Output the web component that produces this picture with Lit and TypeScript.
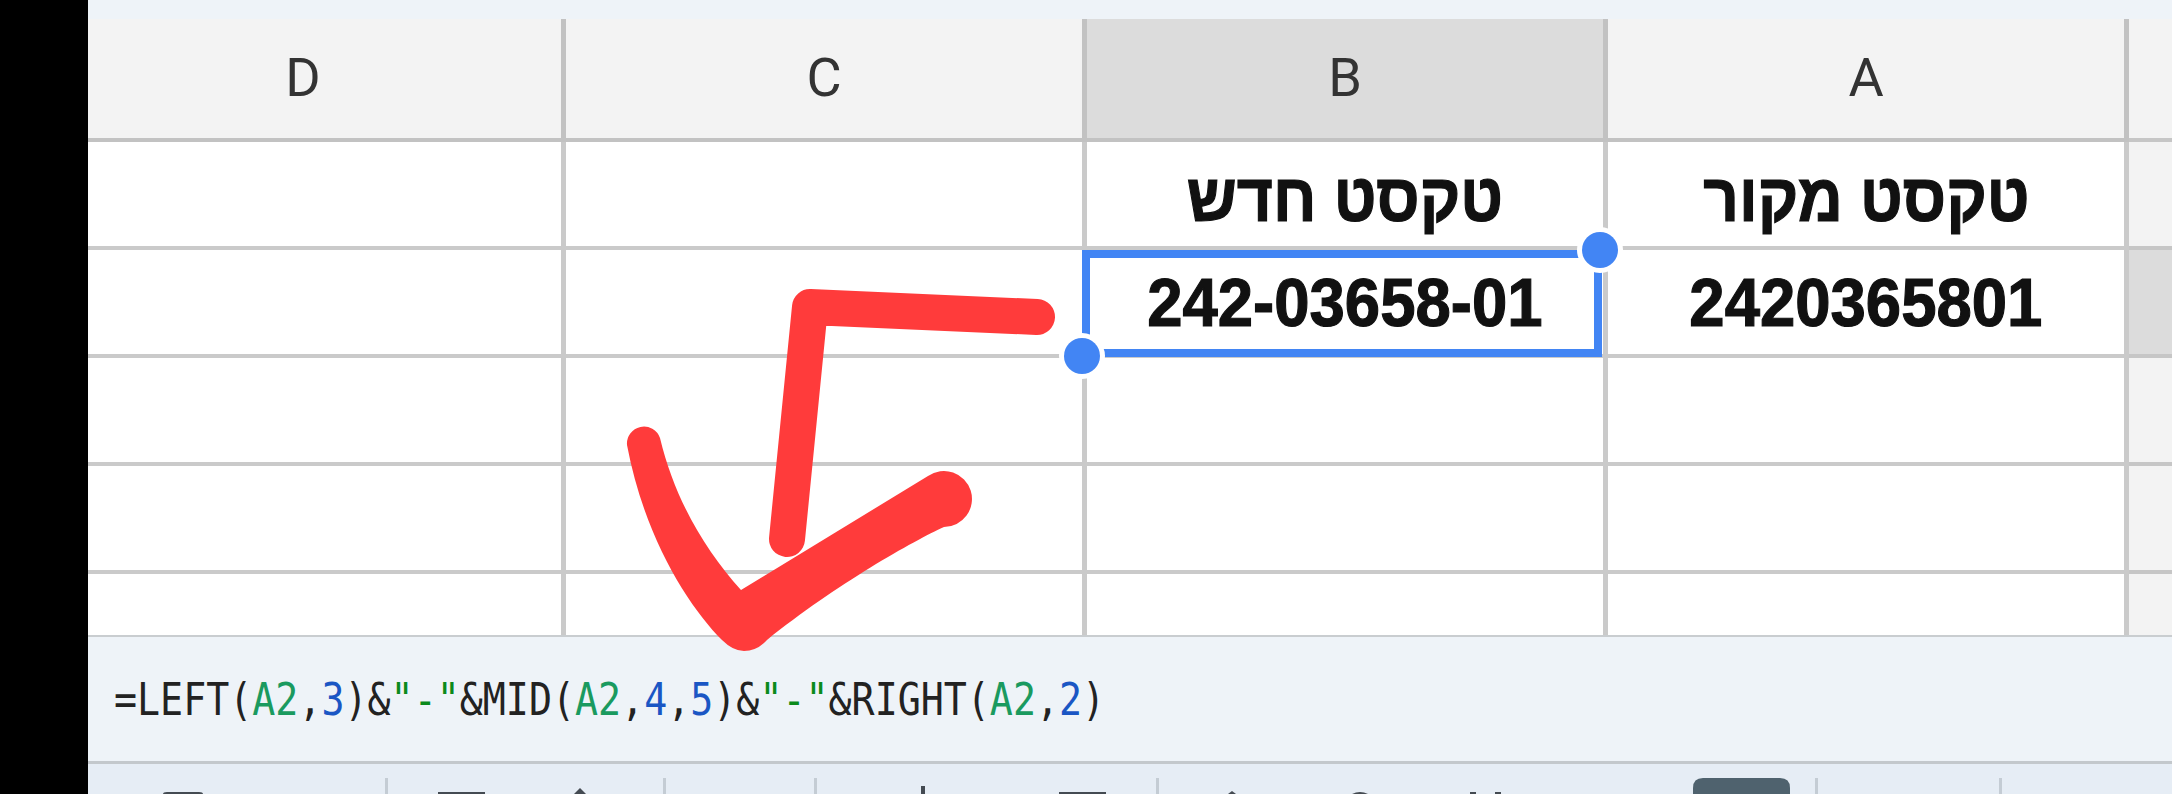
import { LitElement, html, css } from "lit";
import { customElement } from "lit/decorators.js";

const COLS = ["A", "B", "C", "D"];

@customElement("app-root")
export class AppRoot extends LitElement {
  static styles = css`
    :host { display: block; width: 2172px; height: 794px; position: relative; overflow: hidden; background: #000; font-family: "Liberation Sans", Arial, sans-serif; }
    .page { display: flex; height: 794px; margin-left: 88px; width: 2084px; flex-direction: column; background: #eef3f8; }
    .top { height: 19px; flex: none; }
    .sheet { height: 616px; flex: none; overflow: hidden; display: flex; flex-direction: column; direction: rtl; background: #fff; position: relative; }
    .row { display: flex; flex: none; height: 108px; }
    .row.head { height: 123px; background: #f3f3f3; }
    .corner { width: 43px; flex: none; background: #f3f3f3; border-bottom: 4px solid #c6c6c6; box-sizing: border-box; }
    .row.sel .corner { background: #dcdcdc; }
    .cell { width: 521px; flex: none; box-sizing: border-box; border-right: 5px solid #cacaca; border-bottom: 4px solid #cacaca; display: flex; align-items: center; justify-content: center; color: #111; font-weight: 700; direction: ltr; }
    .head .cell { border-color: #c2c2c2; color: #333; font: 400 54px Roboto, sans-serif; padding-bottom: 2px; }
    .head .cell.on { background: #dcdcdc; }
    .val { display: inline-block; font-size: 69px; transform: scaleX(0.92); white-space: nowrap; -webkit-text-stroke: 1.2px #111; }
    .he { direction: rtl; font-size: 67.5px; padding-top: 7px; }
    .last { height: 66px; }
    .sheetline { height: 2px; flex: none; background: #c9cdd0; }
    .formula { height: 124px; flex: none; display: flex; align-items: center; padding-left: 26px; border-bottom: 3px solid #c3c8cc; }
    .ftext { display: inline-block; font: 400 44px "DejaVu Sans Mono", monospace; color: #222; transform: scaleX(0.87); transform-origin: left center; white-space: pre; }
    .g { color: #1a9a5f; }
    .n { color: #1a56c4; }
    .s { color: #0b8a1c; }
    .tools { flex: 1; background: #e6edf5; }
    .over { position: absolute; left: 0; top: 0; pointer-events: none; }
    .t { fill: #444b52; }
    .sep { fill: #c4ccd4; }
  `;

  private cellContent(r: number, c: string) {
    if (r === 1 && c === "A") return html`<span class="val he">טקסט מקור</span>`;
    if (r === 1 && c === "B") return html`<span class="val he">טקסט חדש</span>`;
    if (r === 2 && c === "A") return html`<span class="val">2420365801</span>`;
    if (r === 2 && c === "B") return html`<span class="val">242-03658-01</span>`;
    return "";
  }

  render() {
    return html`
      <div class="page">
        <div class="top"></div>
        <div class="sheet">
          <div class="row head">
            <div class="corner"></div>
            ${COLS.map((c) => html`<div class="cell ${c === "B" ? "on" : ""}">${c}</div>`)}
          </div>
          ${[1, 2, 3, 4, 5].map((r) => html`
            <div class="row ${r === 2 ? "sel" : ""} ${r === 5 ? "last" : ""}">
              <div class="corner"></div>
              ${COLS.map((c) => html`<div class="cell">${this.cellContent(r, c)}</div>`)}
            </div>`)}
        </div>
        <div class="sheetline"></div>
        <div class="formula"><span class="ftext">=LEFT(<span class="g">A2</span>,<span class="n">3</span>)&amp;<span class="s">"-"</span>&amp;MID(<span class="g">A2</span>,<span class="n">4</span>,<span class="n">5</span>)&amp;<span class="s">"-"</span>&amp;RIGHT(<span class="g">A2</span>,<span class="n">2</span>)</span></div>
        <div class="tools"></div>
      </div>
      <svg class="over" width="2172" height="794" viewBox="0 0 2172 794">
        <rect x="1086" y="254" width="512" height="99" fill="none" stroke="#4285f4" stroke-width="8"/>
        <circle cx="1600" cy="250" r="23" fill="#fff"/>
        <circle cx="1600" cy="250" r="18" fill="#4285f4"/>
        <circle cx="1082" cy="356" r="23" fill="#fff"/>
        <circle cx="1082" cy="356" r="18" fill="#4285f4"/>
        <path d="M1037 317 L810 307 L787 539" fill="none" stroke="#ff3b3b" stroke-width="36" stroke-linecap="round" stroke-linejoin="round"/>
        <path fill="#ff3b3b" d="M627 445 A17 17 0 0 1 660 438 C675 500 705 550 741 590 L928 476 A28 28 0 1 1 944 527 C915 540 835 585 767 640 Q757 651 744 651 Q733 651 722 640 C690 608 645 540 627 445 Z"/>
        <g class="sep">
          <rect x="385" y="778" width="3" height="16"/><rect x="663" y="778" width="3" height="16"/>
          <rect x="814" y="778" width="3" height="16"/><rect x="1156" y="778" width="3" height="16"/>
          <rect x="1815" y="778" width="3" height="16"/><rect x="1999" y="778" width="3" height="16"/>
        </g>
        <path d="M1693 794 V788 Q1693 778 1703 778 H1780 Q1790 778 1790 788 V794 Z" fill="#4f626e"/>
        <g class="t">
          <path d="M163 794 Q163 792 167 792 H199 Q203 792 203 794 Z"/>
          <rect x="438" y="792" width="47" height="2"/>
          <path d="M580 788 L586 794 H574 Z"/>
          <rect x="921" y="786" width="4" height="8"/>
          <rect x="1059" y="792" width="47" height="2"/>
          <path d="M1232 791 L1236 794 H1228 Z"/>
          <path d="M1352 794 Q1360 790 1368 794 Z"/>
          <rect x="1470" y="792" width="6" height="2"/>
          <rect x="1495" y="792" width="6" height="2"/>
        </g>
      </svg>
    `;
  }
}
